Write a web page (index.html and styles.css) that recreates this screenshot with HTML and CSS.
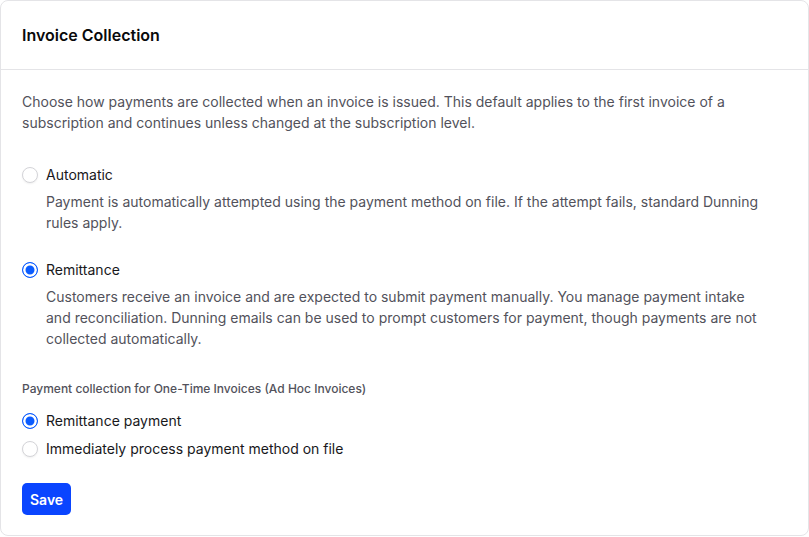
FILE: index.html
```html
<!DOCTYPE html>
<html lang="en">
<head>
  <meta charset="UTF-8">
  <meta name="viewport" content="width=device-width, initial-scale=1.0">
  <title>Invoice Collection</title>
  <link rel="stylesheet" href="styles.css">
</head>
<body>
  <div class="card">
    <div class="card-header">
      <h2>Invoice Collection</h2>
    </div>

    <div class="card-body">
      <p class="intro">Choose how payments are collected when an invoice is issued. This default applies to the first invoice of a subscription and continues unless changed at the subscription level.</p>

      <!-- Modo de cobrança -->
      <div class="option">
        <label class="radio-row">
          <input type="radio" name="mode" value="automatic">
          <span>Automatic</span>
        </label>
        <p class="option-desc">Payment is automatically attempted using the payment method on file. If the attempt fails, standard Dunning rules apply.</p>
      </div>

      <div class="option option-second">
        <label class="radio-row">
          <input type="radio" name="mode" value="remittance" checked>
          <span>Remittance</span>
        </label>
        <p class="option-desc">Customers receive an invoice and are expected to submit payment manually. You manage payment intake and reconciliation. Dunning emails can be used to prompt customers for payment, though payments are not collected automatically.</p>
      </div>

      <!-- Faturas avulsas -->
      <div class="adhoc">
        <div class="section-label">Payment collection for One-Time Invoices (Ad Hoc Invoices)</div>
        <label class="radio-row">
          <input type="radio" name="adhoc" value="remittance" checked>
          <span>Remittance payment</span>
        </label>
        <label class="radio-row radio-row-next">
          <input type="radio" name="adhoc" value="immediate">
          <span>Immediately process payment method on file</span>
        </label>
      </div>

      <button class="save-button">Save</button>
    </div>
  </div>
</body>
</html>
```

FILE: styles.css
```css
body {
  font-family: Inter, "Noto Sans", Arial, sans-serif;
  background-color: #fff;
  margin: 0;
}
.card {
  width: 809px;
  background: #fff;
  border: 1px solid #e4e4e7;
  border-radius: 8px;
  height: 536px;
  box-sizing: border-box;
}
.card-header {
  height: 68px;
  display: flex;
  align-items: center;
  padding: 0 21px;
  border-bottom: 1px solid #e4e4e7;
}
.card-header h2 {
  margin: 0;
  font-size: 16px;
  font-weight: 600;
  color: #09090b;
}
.card-body {
  padding: 20.5px 21px 20px;
}
.intro {
  margin: 0;
  font-size: 14px;
  line-height: 21px;
  color: #52525b;
}
.option {
  margin-top: 32.5px;
}
.option-second {
  margin-top: 27.5px;
}
.radio-row {
  display: flex;
  align-items: center;
  gap: 8px;
  font-size: 14px;
  line-height: 20px;
  color: #18181b;
  cursor: pointer;
}
.radio-row-next {
  margin-top: 8px;
}
.radio-row input {
  appearance: none;
  -webkit-appearance: none;
  margin: 0;
  width: 16px;
  height: 16px;
  border-radius: 50%;
  border: 1px solid #d4d4d8;
  background: #fff;
  box-shadow: 0 1px 2px rgba(0, 0, 0, 0.06);
  flex-shrink: 0;
}
.radio-row input:checked {
  border: 1.5px solid #0b5cff;
  background: #0b5cff;
  box-shadow: inset 0 0 0 2.5px #fff;
}
.option-desc {
  max-width: 720px;
  margin: 5.5px 0 0 24px;
  font-size: 14px;
  line-height: 21px;
  color: #52525b;
}
.adhoc {
  margin-top: 31.5px;
}
.section-label {
  font-size: 12px;
  line-height: 18px;
  font-weight: 500;
  color: #52525b;
  margin-bottom: 13px;
}
.save-button {
  margin-top: 24px;
  height: 32px;
  padding: 0 8px;
  background: #0a45ff;
  color: #fff;
  border: none;
  border-radius: 5px;
  font-family: inherit;
  font-size: 14px;
  font-weight: 600;
  cursor: pointer;
}
.save-button:hover {
  background: #0036d6;
}
```
